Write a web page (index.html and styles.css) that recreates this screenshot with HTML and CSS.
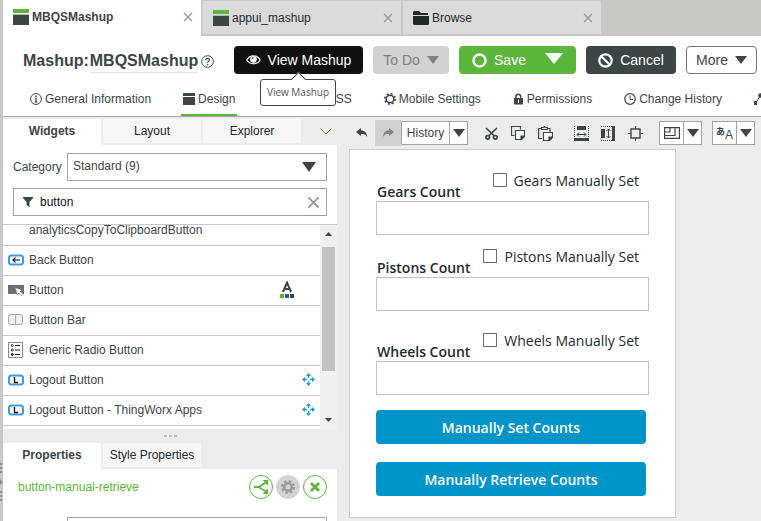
FILE: index.html
```html
<!DOCTYPE html>
<html lang="en">
<head>
    <meta charset="UTF-8">
    <meta name="viewport" content="width=device-width, initial-scale=1.0">
    <title>MBQSMashup - Composer</title>
    <link rel="stylesheet" href="styles.css">
</head>
<body>
    <!-- Shared icons -->
    <svg class="sprite" aria-hidden="true">
        <symbol id="mashup" viewBox="0 0 16 16">
            <path fill="#5bb63b" d="M0 0h16v4H0z"/>
            <path fill="#b4b8b8" d="M0 5h16v1H0z"/>
            <path fill="#3c4646" d="M0 6h16v10H0z"/>
        </symbol>
        <symbol id="caret" viewBox="0 0 12 8">
            <path fill="currentColor" d="M0 0h12L6 8z"/>
        </symbol>
        <symbol id="close" viewBox="0 0 10 10">
            <path stroke="currentColor" stroke-width="1.4" fill="none" d="M1 1l8 8M9 1L1 9"/>
        </symbol>
        <symbol id="move" viewBox="0 0 13 13">
            <path stroke="#1e9bd0" stroke-width="1.400" fill="none" d="M6.500 1v4M6.500 8v4M1 6.500h4M8 6.500h4"/>
            <path fill="#1e9bd0" d="M6.500 0L9 3H4zM6.500 13L4 10h5zM0 6.500L3 4v5zM13 6.500L10 9V4z"/>
        </symbol>
        <symbol id="logout" viewBox="0 0 16 12">
            <rect x="1" y="1.500" width="14" height="9" rx="2.500" fill="#fff" stroke="#3d9be0" stroke-width="2"/>
            <path stroke="#111" stroke-width="1.400" fill="none" d="M6.500 3v5.500H10"/>
        </symbol>
    </svg>

    <div class="rail">
        <svg width="3" height="42" viewBox="0 0 3 42"><path fill="#8490a0" d="M0 1h2v2H0zM0 5h2v2H0zM0 9h2v2H0zM0 17l3 3-3 3zM0 29h2v2H0zM0 33h2v2H0zM0 37h2v2H0z"/></svg>
    </div>

    <div class="app">
        <div class="tabs">
            <div class="tab active">
                <svg width="16" height="16"><use href="#mashup"/></svg>
                <span>MBQSMashup</span>
                <button class="tab-close" aria-label="Close MBQSMashup"><svg width="10" height="10"><use href="#close"/></svg></button>
            </div>
            <div class="tab">
                <svg width="16" height="16"><use href="#mashup"/></svg>
                <span>appui_mashup</span>
                <button class="tab-close" aria-label="Close appui_mashup"><svg width="10" height="10"><use href="#close"/></svg></button>
            </div>
            <div class="tab">
                <svg width="16" height="14" viewBox="0 0 16 14"><path fill="#22292d" d="M0 1l1-1h5l2 2h7v2H0zM0 5h16v8l-1 1H1l-1-1z"/></svg>
                <span>Browse</span>
                <button class="tab-close" aria-label="Close Browse"><svg width="10" height="10"><use href="#close"/></svg></button>
            </div>
        </div>

        <header class="header">
            <h1>Mashup:<span class="name">MBQSMashup</span></h1>
            <svg class="help" width="13" height="13" viewBox="0 0 13 13" fill="none" stroke="#3c4646"><circle cx="6.500" cy="6.500" r="5.800"/><path stroke-width="1.200" d="M4.600 5.200c0-2.600 3.900-2.400 3.900-.3 0 1.500-1.900 1.400-1.900 2.900M6.600 9v1.200"/></svg>
            <div class="actions">
                <div class="view-wrap">
                    <button class="btn btn-view">
                        <svg width="15" height="10" viewBox="0 0 15 10"><path fill="none" stroke="#fff" stroke-width="1.200" d="M.8 5C4-.4 11-.4 14.200 5 11 10 4 10 .8 5z"/><circle cx="7.500" cy="4.500" r="3.300" fill="#fff"/><path stroke="#111" stroke-width=".8" fill="none" d="M6 4c0-1 .6-1.500 1.500-1.500"/></svg>
                        View Mashup
                    </button>
                    <div class="tooltip">View Mashup</div>
                </div>
                <button class="btn btn-todo" disabled>To Do <svg width="12" height="8"><use href="#caret"/></svg></button>
                <div class="split">
                    <button class="btn btn-save">
                        <svg width="15" height="15" viewBox="0 0 15 15"><circle cx="7.500" cy="7.500" r="6" fill="none" stroke="#fff" stroke-width="2.400"/></svg>
                        Save
                    </button>
                    <button class="btn btn-save-more" aria-label="Save options"><svg width="18" height="11" viewBox="0 0 12 8" preserveAspectRatio="none"><path fill="#fff" d="M0 0h12L6 8z"/></svg></button>
                </div>
                <button class="btn btn-cancel">
                    <svg width="15" height="15" viewBox="0 0 15 15" fill="none" stroke="#fff" stroke-width="2.200"><circle cx="7.500" cy="7.500" r="6.200"/><path d="M3.200 3.200l8.600 8.600"/></svg>
                    Cancel
                </button>
                <button class="btn btn-more">More <svg width="12" height="8"><use href="#caret"/></svg></button>
            </div>
        </header>

        <nav class="subnav">
            <a href="#"><svg width="12" height="12" viewBox="0 0 12 12"><circle cx="6" cy="6" r="5.400" fill="none" stroke="#3c4646"/><path fill="#3c4646" d="M5.300 2.500h1.400v1.400H5.300zM4.600 4.700h2.100v3.900h.8v.8H4.600v-.8h.8V5.500h-.8z"/></svg>General Information</a>
            <a href="#" class="active"><svg width="12" height="12" viewBox="0 0 12 12"><path fill="#3c4646" d="M0 0h12v3H0zM0 4h12v8H0z"/></svg>Design</a>
            <a href="#"><svg width="12" height="12" viewBox="0 0 12 12"><path fill="none" stroke="#3c4646" d="M4 1L1 6l3 5M8 1l3 5-3 5"/></svg>Custom CSS</a>
            <a href="#"><svg width="12" height="12" viewBox="0 0 12 12" fill="none" stroke="#3c4646"><circle cx="6" cy="6" r="3.800" stroke-width="1.600"/><circle cx="6" cy="6" r="5.200" stroke-width="1.500" stroke-dasharray="2 2.080"/></svg>Mobile Settings</a>
            <a href="#"><svg width="11" height="12" viewBox="0 0 11 12"><path fill="none" stroke="#3c4646" stroke-width="1.500" d="M3 5V3.500a2.300 2.300 0 0 1 4.600 0V5"/><path fill="#3c4646" d="M1 5h9v6.500H1z"/><path fill="#fff" d="M5 6.500h1V10H5z"/></svg>Permissions</a>
            <a href="#"><svg width="12" height="12" viewBox="0 0 12 12" fill="none" stroke="#3c4646"><circle cx="6" cy="6" r="5.300" stroke-width="1.200"/><path d="M6 2.500V6.500h3"/></svg>Change History</a>
            <a href="#" aria-label="Relationships"><svg width="14" height="12" viewBox="0 0 14 12"><path stroke="#3c4646" fill="none" d="M2 10l4-7 5 5"/><path fill="#3c4646" d="M0 8h3v4H0zM9 7h4v4H9z"/><circle cx="6.500" cy="2.500" r="2.300" fill="#3c4646"/></svg></a>
        </nav>

        <main class="workspace">
            <aside class="side">
                <section class="widgets">
                    <div class="panel-tabs">
                        <button class="active">Widgets</button>
                        <button>Layout</button>
                        <button>Explorer</button>
                        <button class="collapse" aria-label="Collapse panel"><svg width="12" height="7" viewBox="0 0 12 7"><path fill="none" stroke="#a06a2c" d="M.5.5L6 6 11.500.5"/></svg></button>
                    </div>
                    <div class="filters">
                        <div class="category">
                            <label for="category">Category</label>
                            <div class="select-box">
                                <select id="category"><option>Standard (9)</option></select>
                                <svg width="14" height="10" viewBox="0 0 12 8" preserveAspectRatio="none"><path fill="#3c4646" d="M0 0h12L6 8z"/></svg>
                            </div>
                        </div>
                        <div class="search">
                            <svg width="10" height="10" viewBox="0 0 10 10"><path fill="#3c4646" d="M0 0h10v1L6.500 5v5L3.500 8V5L0 1z"/></svg>
                            <input type="text" value="button" aria-label="Filter widgets">
                            <button aria-label="Clear filter"><svg width="13" height="13"><use href="#close"/></svg></button>
                        </div>
                    </div>
                    <div class="list">
                        <ul>
                            <li><span class="icon"></span>analyticsCopyToClipboardButton</li>
                            <li>
                                <span class="icon"><svg width="16" height="12" viewBox="0 0 16 12"><rect x="1" y="1.500" width="14" height="9" rx="2.500" fill="#fff" stroke="#3d9be0" stroke-width="2"/><path stroke="#111" stroke-width="1.200" fill="none" d="M12 6H5M7.500 3.500L5 6l2.500 2.500"/></svg></span>Back Button
                            </li>
                            <li>
                                <span class="icon"><svg width="16" height="12" viewBox="0 0 16 12"><path fill="#6a6c7c" d="M0 1h16v9H0z"/><path fill="#fff" stroke="#6a6c7c" stroke-width=".6" d="M7 3.500l7 2.500-1.800 1.300 3 3-1.500 1.700-3-3-1.500 2z"/></svg></span>Button
                                <svg class="mark" width="14" height="17" viewBox="0 0 14 17"><path fill="none" stroke="#3c4646" stroke-width="2" d="M3 11L7 1.500 11 11M4.500 8h5"/><path fill="#5bb63b" d="M0 13h4v4H0z"/><path fill="#1e6496" d="M5 13h4v4H5z"/><path fill="#3c4646" d="M10 13h4v4h-4z"/></svg>
                            </li>
                            <li>
                                <span class="icon"><svg width="15" height="11" viewBox="0 0 15 11"><rect x=".5" y=".5" width="14" height="10" rx="2" fill="#eee" stroke="#aaa"/><path stroke="#aaa" d="M7.500 0v11"/></svg></span>Button Bar
                            </li>
                            <li>
                                <span class="icon"><svg width="15" height="16" viewBox="0 0 15 16"><path fill="#fff" stroke="#888" d="M.5.5h14v15H.5z"/><path stroke="#222" d="M7 3.500h5M7 8h5M7 12.500h5"/><g fill="none" stroke="#222"><circle cx="4.300" cy="3.500" r="1"/><circle cx="4.300" cy="8" r="1"/><circle cx="4.300" cy="12.500" r="1" fill="#222"/></g></svg></span>Generic Radio Button
                            </li>
                            <li><span class="icon"><svg width="16" height="12"><use href="#logout"/></svg></span>Logout Button<svg class="drag" width="13" height="13"><use href="#move"/></svg></li>
                            <li><span class="icon"><svg width="16" height="12"><use href="#logout"/></svg></span>Logout Button - ThingWorx Apps<svg class="drag" width="13" height="13"><use href="#move"/></svg></li>
                        </ul>
                        <div class="scrollbar">
                            <svg width="7" height="4"><path fill="#444" d="M0 4h7L3.500 0z"/></svg>
                            <div class="thumb"></div>
                            <svg width="7" height="4"><path fill="#444" d="M0 0h7L3.500 4z"/></svg>
                        </div>
                    </div>
                </section>

                <div class="splitter"><i></i><i></i><i></i></div>

                <section class="properties">
                    <div class="panel-tabs">
                        <button class="active">Properties</button>
                        <button>Style Properties</button>
                    </div>
                    <div class="selected">
                        <span>button-manual-retrieve</span>
                        <button class="round" aria-label="Bindings"><svg width="14" height="14" viewBox="0 0 14 14"><path fill="none" stroke="#5bb63b" stroke-width="1.800" d="M0 7h4.500L12 2.500M4.500 7l7.500 4.500"/><path fill="#5bb63b" d="M8.500 0H14v5.500zM8.500 14H14V8.500z"/></svg></button>
                        <button class="round gear" aria-label="Configure"><svg width="14" height="14" viewBox="0 0 14 14" fill="none" stroke="#999"><circle cx="7" cy="7" r="3.800" stroke-width="2.600"/><circle cx="7" cy="7" r="5.900" stroke-width="2" stroke-dasharray="2.600 2.030"/></svg></button>
                        <button class="round" aria-label="Delete"><svg width="10" height="10" viewBox="0 0 10 10"><path stroke="#5bb63b" stroke-width="2.800" d="M1 1l8 8M9 1L1 9"/></svg></button>
                    </div>
                    <input class="prop-filter" type="text" aria-label="Filter properties">
                </section>
            </aside>

            <section class="design">
                <div class="toolbar">
                    <button class="tool" aria-label="Undo"><svg width="12" height="10" viewBox="0 0 12 10"><path fill="#3c4646" d="M0 4l5-4v2.500c4 0 6 2.500 6 6.500-1-2.500-3-3-6-3V8z"/></svg></button>
                    <button class="tool redo" aria-label="Redo" disabled><svg width="12" height="10" viewBox="0 0 12 10"><path fill="#808484" d="M12 4L7 0v2.500C3 2.500 1 5 1 9c1-2.500 3-3 6-3V8z"/></svg></button>
                    <div class="combo history">
                        <button>History</button>
                        <button aria-label="History options"><svg width="12" height="8"><use href="#caret"/></svg></button>
                    </div>
                    <div class="tools">
                        <button class="tool" aria-label="Cut"><svg width="13" height="13" viewBox="0 0 13 13" fill="none" stroke="#3c4646" stroke-width="1.700"><path d="M1 1l8.500 8M12 1L3.500 9"/><circle cx="2.700" cy="10.300" r="1.800"/><circle cx="10.300" cy="10.300" r="1.800"/></svg></button>
                        <button class="tool" aria-label="Copy"><svg width="14" height="14" viewBox="0 0 14 14" fill="none" stroke="#3c4646" stroke-width="1.200"><path d="M3.500 9.500h-3v-9h9v3"/><path fill="#fff" d="M4.500 4.500h9v6l-3 3h-6z"/><path fill="#3c4646" d="M10 13v-3h3z"/></svg></button>
                        <button class="tool" aria-label="Paste"><svg width="15" height="15" viewBox="0 0 15 15" fill="none" stroke="#3c4646" stroke-width="1.200"><path d="M4 12.500H.6V2.500H3M10 2.500h2V6M3.500 3.500v-2h2l1-1 1 1h2v2z"/><path fill="#fff" d="M5.500 6.500h9v5l-3 3h-6z"/><path fill="#3c4646" d="M11 14v-3h3z"/></svg></button>
                    </div>
                    <div class="tools">
                        <button class="tool" aria-label="Same width"><svg width="15" height="15" viewBox="0 0 15 15"><path fill="#3c4646" d="M3 0h9v4H3zM0 12h15v3H0z"/><path stroke="#3c4646" d="M3 8.500h9M5 6.500l-2 2 2 2M10 6.500l2 2-2 2" fill="none"/><path stroke="#3c4646" stroke-dasharray="1 1" d="M.5 0v12M14.500 0v12"/></svg></button>
                        <button class="tool" aria-label="Same height"><svg width="14" height="15" viewBox="0 0 14 15"><path fill="#3c4646" d="M0 3h4v9H0zM11 0h3v15h-3z"/><path stroke="#3c4646" d="M7.500 3v9M5.500 5l2-2 2 2M5.500 10l2 2 2-2" fill="none"/><path stroke="#3c4646" stroke-dasharray="1 1" d="M0 .5h11M0 14.500h11"/></svg></button>
                        <button class="tool" aria-label="Same size"><svg width="15" height="15" viewBox="0 0 15 15" fill="none" stroke="#3c4646"><path stroke-width="1.400" d="M3 3h9v9H3z"/><path d="M7.500 0v3M7.500 12v3M0 7.500h3M12 7.500h3"/></svg></button>
                    </div>
                    <div class="combo">
                        <button aria-label="Canvas size"><svg width="16" height="12" viewBox="0 0 16 12"><path fill="none" stroke="#3c4646" stroke-width="1.200" d="M.6.6h14.800v10.800H.6zM.6 8.500H11V.6M.6 5H6V.6"/></svg></button>
                        <button aria-label="Canvas size options"><svg width="12" height="8"><use href="#caret"/></svg></button>
                    </div>
                    <div class="combo">
                        <button aria-label="Language" class="lang"><span>あ</span>A</button>
                        <button aria-label="Language options"><svg width="12" height="8"><use href="#caret"/></svg></button>
                    </div>
                </div>

                <div class="canvas">
                    <div class="field">
                        <div class="field-head">
                            <label class="count" for="gears">Gears Count</label>
                            <label class="manual"><input type="checkbox">Gears Manually Set</label>
                        </div>
                        <input type="text" id="gears">
                    </div>
                    <div class="field">
                        <div class="field-head">
                            <label class="count" for="pistons">Pistons Count</label>
                            <label class="manual"><input type="checkbox">Pistons Manually Set</label>
                        </div>
                        <input type="text" id="pistons">
                    </div>
                    <div class="field last">
                        <div class="field-head">
                            <label class="count" for="wheels">Wheels Count</label>
                            <label class="manual"><input type="checkbox">Wheels Manually Set</label>
                        </div>
                        <input type="text" id="wheels">
                    </div>
                    <div class="canvas-actions">
                        <button>Manually Set Counts</button>
                        <button>Manually Retrieve Counts</button>
                    </div>
                </div>
            </section>
        </main>
    </div>
</body>
</html>
```
FILE: styles.css
```css
* {
    margin: 0;
    padding: 0;
    box-sizing: border-box;
}

body {
    display: flex;
    height: 100vh;
    overflow: hidden;
    font-family: "Liberation Sans", Arial, sans-serif;
    font-size: 12px;
    color: #3c4646;
    background: #fff;
}

button,
input,
select {
    font: inherit;
    color: inherit;
    border: none;
    background: none;
}

svg {
    display: block;
    flex: none;
}

.sprite {
    position: absolute;
    width: 0;
    height: 0;
}

.rail {
    flex: none;
    width: 3px;
    padding-top: 462px;
    background: #c8c8c6;
}

.app {
    flex: 1;
    min-width: 0;
    display: flex;
    flex-direction: column;
}

/* Document tabs */
.tabs {
    display: flex;
    gap: 2px;
    height: 36px;
    background: #c8c8c6;
}

.tab {
    display: flex;
    align-items: center;
    gap: 3px;
    width: 198px;
    height: 33px;
    margin-top: 1px;
    padding: 0 8px 0 10px;
    color: #22292d;
    background: #dadada;
}

.tab.active {
    height: 36px;
    margin-top: 0;
    padding-bottom: 2px;
    font-weight: bold;
    color: #3c4646;
    background: #fff;
}

.tab-close {
    margin-left: auto;
    color: #999;
}

/* Title and actions */
.header {
    display: flex;
    align-items: center;
    height: 48px;
    padding: 0 4px 0 20px;
}

h1 {
    display: flex;
    align-items: center;
    padding-top: 2px;
    font-size: 16px;
    font-weight: bold;
    line-height: 22px;
}

.name {
    margin-left: 1px;
    border-bottom: 1px solid #e4e4e4;
}

.help {
    margin-top: 2px;
    margin-left: 3px;
}

.actions {
    display: flex;
    gap: 10px;
    margin-left: auto;
}

.btn {
    display: flex;
    align-items: center;
    justify-content: center;
    gap: 7px;
    height: 28px;
    border-radius: 4px;
    font-size: 14px;
    color: #fff;
    white-space: nowrap;
}

.view-wrap {
    position: relative;
}

.btn-view {
    width: 129px;
    background: #111;
}

.btn-todo {
    width: 76px;
    color: #808080;
    background: #d2d2d2;
}

.split {
    display: flex;
}

.btn-save {
    width: 76px;
    padding-left: 4px;
    border-radius: 4px 0 0 4px;
    background: #5bb63b;
}

.btn-save-more {
    width: 41px;
    padding-right: 4px;
    padding-bottom: 4px;
    border-radius: 0 4px 4px 0;
    background: #5bb63b;
}

.btn-cancel {
    width: 90px;
    background: #3c4646;
}

.btn-more {
    width: 71px;
    border: 1px solid #707878;
    color: #3c4646;
}

.tooltip {
    position: absolute;
    z-index: 5;
    top: 33px;
    left: 26px;
    width: 76px;
    height: 27px;
    border: 1px solid #3c4646;
    border-radius: 3px;
    font-family: "Open Sans", sans-serif;
    font-size: 10px;
    line-height: 25px;
    text-align: center;
    color: #555;
    background: #fff;
}

.tooltip::before {
    content: '';
    position: absolute;
    top: -6px;
    left: 32px;
    width: 10px;
    height: 10px;
    border: 1px solid #3c4646;
    border-width: 1px 0 0 1px;
    background: #fff;
    transform: rotate(45deg);
}

/* Section links */
.subnav {
    display: flex;
    gap: 28px;
    height: 33px;
    padding-left: 25px;
    border-bottom: 1px solid #a8a8a8;
    overflow: hidden;
}

.subnav a {
    display: flex;
    flex: none;
    align-items: center;
    gap: 3px;
    padding: 0 2px;
    border-bottom: 2px solid transparent;
    color: inherit;
    text-decoration: none;
    white-space: nowrap;
}

.subnav a.active {
    border-color: #5bb63b;
}

.workspace {
    flex: 1;
    display: flex;
    min-height: 0;
    background: #ececec;
}

/* Left side panels */
.side {
    display: flex;
    flex-direction: column;
    flex: none;
    width: 334px;
}

.widgets {
    flex: 1;
    display: flex;
    flex-direction: column;
    min-height: 0;
    padding-top: 2px;
}

.panel-tabs {
    display: flex;
    gap: 2px;
    height: 26px;
}

.panel-tabs button {
    width: 98px;
    height: 24px;
    color: #22292d;
    background: #f6f6f6;
}

.panel-tabs .active {
    height: 26px;
    padding-bottom: 2px;
    font-weight: bold;
    color: #3c4646;
    background: #fff;
}

.panel-tabs .collapse {
    width: auto;
    padding-left: 17px;
    background: none;
}

.filters {
    display: flex;
    flex-direction: column;
    gap: 7px;
    padding: 8px 10px;
    border-bottom: 1px solid #c8c8c8;
    background: #fff;
}

.category {
    display: flex;
    align-items: center;
    gap: 5px;
}

.category label {
    width: 49px;
}

.select-box {
    flex: 1;
    display: grid;
    align-items: center;
}

.select-box select,
.select-box svg {
    grid-area: 1 / 1;
}

.select-box select {
    height: 28px;
    padding: 0 5px 2px;
    border: 1px solid #a0a4a4;
    appearance: none;
    background: #fff;
}

.select-box svg {
    justify-self: end;
    margin-right: 11px;
    pointer-events: none;
}

.search {
    display: flex;
    align-items: center;
    gap: 7px;
    height: 28px;
    padding: 0 6px 0 9px;
    border: 1px solid #a0a4a4;
}

.search input {
    flex: 1;
    min-width: 0;
    color: #111;
}

.search button {
    color: #999;
}

.list {
    flex: 1;
    display: flex;
    min-height: 0;
    overflow: hidden;
    background: #fff;
}

/* list is scrolled part way down its first row */
.list ul {
    flex: 1;
    margin-top: -9px;
    list-style: none;
}

.list li {
    display: flex;
    align-items: center;
    height: 30px;
    padding: 0 0 2px 5px;
    border-bottom: 1px solid #c8c8c8;
}

.icon {
    width: 21px;
}

.mark {
    margin-left: auto;
    margin-right: 26px;
}

.drag {
    margin-left: auto;
    margin-right: 5px;
}

.scrollbar {
    display: flex;
    flex-direction: column;
    align-items: center;
    width: 17px;
    padding: 7px 0;
    background: #f0f0f0;
}

.thumb {
    width: 13px;
    height: 124px;
    margin-top: 11px;
    margin-bottom: auto;
    background: #c1c1c1;
}

.splitter {
    display: flex;
    align-items: center;
    justify-content: center;
    gap: 2px;
    height: 14px;
}

.splitter i {
    width: 3px;
    height: 2px;
    background: #bbb;
}

.properties {
    height: 78px;
    overflow: hidden;
    background: #fff;
}

.properties .panel-tabs {
    background: #ececec;
}

.selected {
    display: flex;
    align-items: center;
    gap: 3px;
    height: 48px;
    padding: 0 10px 12px 15px;
    color: #5bb63b;
}

.selected span {
    margin-right: auto;
}

.round {
    display: flex;
    align-items: center;
    justify-content: center;
    width: 24px;
    height: 24px;
    border: 1px solid #5bb63b;
    border-radius: 50%;
}

.round.gear {
    border-color: #d2d2d2;
    background: #d2d2d2;
}

.prop-filter {
    display: block;
    width: 260px;
    height: 28px;
    margin-left: auto;
    margin-right: 10px;
    border: 1px solid #a0a4a4;
}

/* Designer */
.design {
    flex: 1;
    min-width: 0;
    padding: 3px 6px 3px 12px;
}

.toolbar {
    display: flex;
    align-items: center;
    height: 26px;
}

.tool {
    display: flex;
    align-items: center;
    justify-content: center;
    width: 26px;
    height: 26px;
}

.redo {
    background: #d0d0d0;
}

.combo {
    display: flex;
    height: 24px;
    border: 1px solid #a0a4a4;
    background: #fff;
}

.combo + .combo {
    margin-left: 10px;
}

.combo button {
    display: flex;
    align-items: center;
    justify-content: center;
    width: 23px;
}

.combo button + button {
    width: 18px;
    border-left: 1px solid #a0a4a4;
}

.history button:first-child {
    width: 47px;
}

.tools {
    display: flex;
    gap: 1px;
    margin-left: 10px;
}

.tools + .combo {
    margin-left: 11px;
}

.combo .lang {
    align-items: flex-end;
    padding-bottom: 2px;
    font-family: "Liberation Sans", "Noto Sans CJK JP", sans-serif;
    font-size: 12px;
}

.lang span {
    margin-bottom: 4px;
    font-size: 9px;
    font-weight: bold;
}

.canvas {
    width: 327px;
    margin-top: 3px;
    padding: 21px 26px;
    border: 1px solid #ccc;
    font-family: "Open Sans", sans-serif;
    font-size: 14px;
    color: #232b2d;
    background: #fff;
}

.field {
    margin-bottom: 12px;
}

.field + .field {
    margin-bottom: 20px;
}

.field.last {
    margin-bottom: 15px;
}

.field-head {
    display: flex;
    justify-content: space-between;
    height: 30px;
    padding: 0 10px 0 1px;
}

.count {
    align-self: flex-end;
    font-weight: 600;
    line-height: 18px;
}

.manual {
    display: flex;
    align-items: center;
    gap: 7px;
    height: 18px;
}

.manual input {
    width: 14px;
    height: 14px;
    border: 1px solid #6a6c7c;
    appearance: none;
}

.field > input {
    display: block;
    width: 100%;
    height: 34px;
    border: 1px solid #bcc2c8;
}

.canvas-actions {
    display: flex;
    flex-direction: column;
    gap: 18px;
    padding-right: 3px;
}

.canvas-actions button {
    height: 34px;
    border-radius: 4px;
    font-weight: 600;
    color: #fff;
    background: #0094c8;
}
```
